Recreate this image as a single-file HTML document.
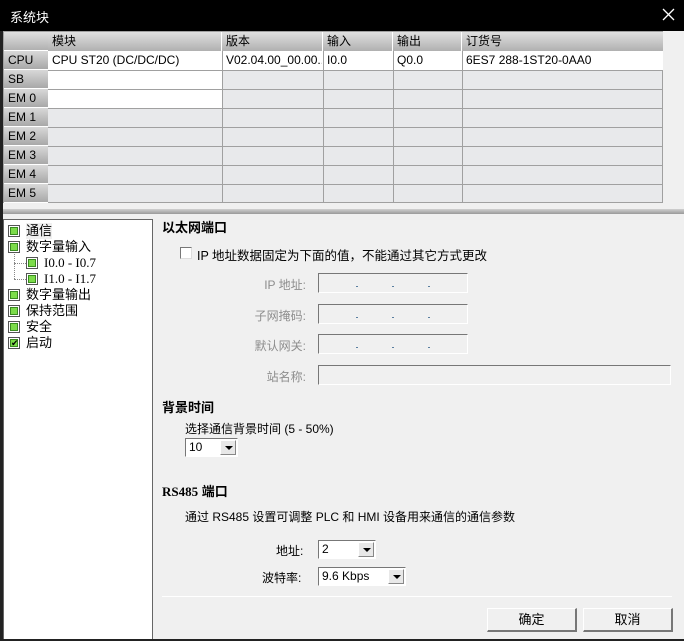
<!DOCTYPE html>
<html><head><meta charset="utf-8"><style>
*{margin:0;padding:0;box-sizing:border-box}
body{width:684px;height:641px;background:#f0f0f0;position:relative;overflow:hidden;font-family:"Liberation Sans","Noto Sans CJK SC",sans-serif;font-size:12px;color:#000}
.a{position:absolute;white-space:nowrap}
.title{left:0;top:0;width:684px;height:31px;background:#000;color:#fff;font-size:13px}
.grid{left:3px;top:31px;width:660px;height:172px;border:1px solid #a0a0a0;background:#e8e9eb}
.rh{position:absolute;left:0;width:44px;height:19px;background:linear-gradient(#d8d8d8,#a8a8a8);border-bottom:1px solid #fff;padding-left:4px;line-height:18px}
.hd{position:absolute;top:0;height:19px;background:linear-gradient(#e0e0e0,#b0b0b0);line-height:18px;padding-left:4px;border-right:1px solid #fff}
.hl{position:absolute;left:44px;width:615px;height:1px;background:#a0a0a0}
.vl{position:absolute;top:19px;width:1px;height:152px;background:#a0a0a0}
.cell{position:absolute;height:18px;line-height:18px;padding-left:4px}
.tree{left:3px;top:219px;width:150px;height:422px;background:#fff;border:1px solid #666;border-bottom:none}
.bx{position:absolute;width:12px;height:12px;border:1px solid #555;background:#fff}
.bx i{position:absolute;left:1px;top:1px;width:8px;height:8px;background:#7cdc4a;border:1px solid #3a8a20}
.ti{position:absolute;font-size:13px;line-height:16px}
.fld{position:absolute;height:20px;border:1px solid #fff;border-top-color:#777;border-left-color:#777;background:#f0f0f0}
.dot{position:absolute;top:12px;width:2px;height:1px;background:#5a7fa0}
.lbl{position:absolute;color:#8d8d8d;text-align:right;width:80px;font-size:12px}
.dd{position:absolute;height:19px;border:1px solid #777;border-right-color:#fff;border-bottom-color:#fff;background:#fff;padding-left:3px;line-height:17px}
.dd b{position:absolute;right:1px;top:1px;width:16px;height:15px;background:#e8e8e8;border:1px solid #888;border-top-color:#fff;border-left-color:#fff}
.dd b:after{content:"";position:absolute;left:4px;top:5px;border-left:4px solid transparent;border-right:4px solid transparent;border-top:4px solid #000}
.btn{position:absolute;height:24px;background:#f0f0f0;border:1px solid #fff;border-right:2px solid #777;border-bottom:2px solid #777;text-align:center;line-height:21px;font-size:13px}
.h{position:absolute;font-weight:bold;font-size:13px}
</style></head><body>
<div class="a title"><span style="position:absolute;left:10px;top:7px">系统块</span>
<svg style="position:absolute;left:662px;top:8px" width="13" height="13"><path d="M1 1L12 12M12 1L1 12" stroke="#fff" stroke-width="1.3"/></svg></div>
<div class="a grid">
<div class="rh" style="top:0;background:linear-gradient(#e0e0e0,#b0b0b0)"></div>
<div class="hd" style="left:44px;width:174px">模块</div>
<div class="hd" style="left:218px;width:101px">版本</div>
<div class="hd" style="left:319px;width:70px">输入</div>
<div class="hd" style="left:389px;width:69px">输出</div>
<div class="hd" style="left:458px;width:201px;border-right:none">订货号</div>
<div class="rh" style="top:19px">CPU</div>
<div class="rh" style="top:38px">SB</div>
<div class="rh" style="top:57px">EM 0</div>
<div class="rh" style="top:76px">EM 1</div>
<div class="rh" style="top:95px">EM 2</div>
<div class="rh" style="top:114px">EM 3</div>
<div class="rh" style="top:133px">EM 4</div>
<div class="rh" style="top:152px">EM 5</div>
<div style="position:absolute;left:44px;top:19px;width:174px;height:57px;background:#fff"></div>
<div style="position:absolute;left:218px;top:19px;width:441px;height:19px;background:#fff"></div>
<div class="hl" style="top:38px"></div><div class="hl" style="top:57px"></div><div class="hl" style="top:76px"></div><div class="hl" style="top:95px"></div><div class="hl" style="top:114px"></div><div class="hl" style="top:133px"></div><div class="hl" style="top:152px"></div>
<div class="vl" style="left:218px"></div><div class="vl" style="left:319px"></div><div class="vl" style="left:389px"></div><div class="vl" style="left:458px"></div>
<div class="cell" style="left:44px;top:19px">CPU ST20 (DC/DC/DC)</div>
<div class="cell" style="left:218px;top:19px;width:100px;overflow:hidden">V02.04.00_00.00...</div>
<div class="cell" style="left:319px;top:19px">I0.0</div>
<div class="cell" style="left:389px;top:19px">Q0.0</div>
<div class="cell" style="left:458px;top:19px">6ES7 288-1ST20-0AA0</div>
</div>
<div class="a" style="left:0;top:209px;width:684px;height:5px;background:linear-gradient(#d0d0d0,#999)"></div>
<div class="a" style="left:0;top:31px;width:3px;height:610px;background:#222"></div>
<div class="a tree">
<div class="bx" style="left:4px;top:5px"><i></i></div><div class="ti" style="left:22px;top:3px;background:#f0f0f0">通信</div>
<div class="bx" style="left:4px;top:21px"><i></i></div><div class="ti" style="left:22px;top:19px">数字量输入</div>
<div style="position:absolute;left:10px;top:34px;width:1px;height:25px;border-left:1px dotted #888"></div>
<div style="position:absolute;left:10px;top:43px;width:12px;border-top:1px dotted #888"></div>
<div style="position:absolute;left:10px;top:59px;width:12px;border-top:1px dotted #888"></div>
<div class="bx" style="left:22px;top:37px"><i></i></div><div class="ti" style="left:40px;top:35px;font-family:'Liberation Serif',serif">I0.0 - I0.7</div>
<div class="bx" style="left:22px;top:53px"><i></i></div><div class="ti" style="left:40px;top:51px;font-family:'Liberation Serif',serif">I1.0 - I1.7</div>
<div class="bx" style="left:4px;top:69px"><i></i></div><div class="ti" style="left:22px;top:67px">数字量输出</div>
<div class="bx" style="left:4px;top:85px"><i></i></div><div class="ti" style="left:22px;top:83px">保持范围</div>
<div class="bx" style="left:4px;top:101px"><i></i></div><div class="ti" style="left:22px;top:99px">安全</div>
<div class="bx" style="left:4px;top:117px"><i style="font-size:9px;line-height:6px;color:#000;font-style:normal;text-align:center">✔</i></div><div class="ti" style="left:22px;top:115px">启动</div>
</div>
<div class="h" style="left:162px;top:217px">以太网端口</div>
<div style="position:absolute;left:180px;top:247px;width:12px;height:12px;border:1px solid #777;border-right-color:#ddd;border-bottom-color:#ddd;background:#fff"></div>
<div class="a" style="left:197px;top:245px;font-size:12.5px">IP 地址数据固定为下面的值，不能通过其它方式更改</div>
<div class="lbl" style="left:226px;top:276px">IP 地址:</div>
<div class="lbl" style="left:226px;top:307px">子网掩码:</div>
<div class="lbl" style="left:226px;top:337px">默认网关:</div>
<div class="lbl" style="left:226px;top:368px">站名称:</div>
<div class="fld" style="left:318px;top:273px;width:150px"><i class="dot" style="left:37px"></i><i class="dot" style="left:73px"></i><i class="dot" style="left:109px"></i></div>
<div class="fld" style="left:318px;top:304px;width:150px"><i class="dot" style="left:37px"></i><i class="dot" style="left:73px"></i><i class="dot" style="left:109px"></i></div>
<div class="fld" style="left:318px;top:334px;width:150px"><i class="dot" style="left:37px"></i><i class="dot" style="left:73px"></i><i class="dot" style="left:109px"></i></div>
<div class="fld" style="left:318px;top:365px;width:353px"></div>
<div class="h" style="left:162px;top:397px">背景时间</div>
<div class="a" style="left:185px;top:420px">选择通信背景时间 (5 - 50%)</div>
<div class="dd" style="left:185px;top:438px;width:53px">10<b></b></div>
<div class="h" style="left:162px;top:481px"><span style="font-family:'Liberation Serif',serif">RS485</span> 端口</div>
<div class="a" style="left:185px;top:508px">通过 RS485 设置可调整 PLC 和 HMI 设备用来通信的通信参数</div>
<div class="a" style="left:276px;top:542px">地址:</div>
<div class="a" style="left:262px;top:569px">波特率:</div>
<div class="dd" style="left:318px;top:540px;width:58px">2<b></b></div>
<div class="dd" style="left:318px;top:567px;width:88px">9.6 Kbps<b></b></div>
<div class="a" style="left:162px;top:596px;width:510px;height:1px;background:#a0a0a0;border-bottom:1px solid #fff"></div>
<div class="btn" style="left:487px;top:608px;width:90px">确定</div>
<div class="btn" style="left:583px;top:608px;width:90px">取消</div>
<div class="a" style="left:0;top:639px;width:684px;height:2px;background:#222"></div>
</body></html>
